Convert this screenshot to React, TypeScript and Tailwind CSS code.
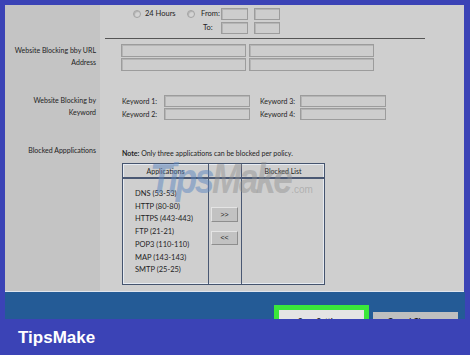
import React from "react";

const inp = "border border-[#9c9c9c] bg-[#cdcdcd] shadow-[inset_1px_1px_0_#b5b5b5]";

function Radio() {
  return <span className="block w-[8px] h-[8px] rounded-full border border-[#a3a3a3] bg-[#d4d4d4] shadow-[inset_1px_1px_1px_#b0b0b0]" />;
}

const apps = [
  "DNS (53-53)",
  "HTTP (80-80)",
  "HTTPS (443-443)",
  "FTP (21-21)",
  "POP3 (110-110)",
  "MAP (143-143)",
  "SMTP (25-25)",
];

export default function App() {
  return (
    <div className="w-[470px] h-[355px] bg-[#3b43b6] overflow-hidden flex flex-col font-[Lato,sans-serif] text-[7px] text-[#1e1e1e] leading-[12px]">
      {/* panel */}
      <div className="pt-[5px] pl-[5px] pr-[6px]">
        <div className="relative flex flex-col h-[287px] bg-[#cfcfcf] border-b border-[#dfe5ee]">
          {/* Row A: schedule */}
          <div className="flex h-[34px]">
            <div className="w-[95px] bg-[#c4c4c4]" />
            <div className="flex-1 flex flex-col">
              <div className="flex items-start pt-[3px] h-[33px]">
                <div className="ml-[33px] w-[54px] flex items-center h-[12px]">
                  <Radio />
                  <span className="ml-[4px] text-[7.5px]">24 Hours</span>
                </div>
                <div className="w-[14px] flex items-center h-[12px]">
                  <Radio />
                </div>
                <div className="w-[20px] flex flex-col gap-[2px] text-[7.5px]">
                  <span className="h-[12px]">From:</span>
                  <span className="h-[12px] pl-[2px]">To:</span>
                </div>
                <div className="w-[27px] flex flex-col gap-[2px]">
                  <div className={`h-[12px] ${inp}`} />
                  <div className={`h-[12px] ${inp}`} />
                </div>
                <div className="ml-[6px] w-[26px] flex flex-col gap-[2px]">
                  <div className={`h-[12px] ${inp}`} />
                  <div className={`h-[12px] ${inp}`} />
                </div>
              </div>
              <div className="ml-[5px] w-[320px] h-px bg-[#555]" />
            </div>
          </div>

          {/* Row B: URL */}
          <div className="flex h-[51px]">
            <div className="w-[95px] bg-[#c4c4c4] pt-[5px] pr-[4px] text-right">
              <div>Website Blocking bby URL</div>
              <div>Address</div>
            </div>
            <div className="flex-1 pt-[5px] pl-[21px]">
              <div className="grid grid-cols-[125px_125px] gap-x-[3px] gap-y-[1px]">
                <div className={`h-[13px] ${inp}`} />
                <div className={`h-[13px] ${inp}`} />
                <div className={`h-[13px] ${inp}`} />
                <div className={`h-[13px] ${inp}`} />
              </div>
            </div>
          </div>

          {/* Row C: Keywords */}
          <div className="flex h-[50px]">
            <div className="w-[95px] bg-[#c4c4c4] pt-[4px] pr-[4px] text-right">
              <div>Website Blocking by</div>
              <div>Keyword</div>
            </div>
            <div className="flex-1 pt-[5px] pl-[22px]">
              <div className="grid grid-cols-[42px_86px_10px_40px_86px] gap-y-[1px] items-center">
                <span>Keyword 1:</span>
                <div className={`h-[12px] ${inp}`} />
                <span />
                <span>Keyword 3:</span>
                <div className={`h-[12px] ${inp}`} />
                <span>Keyword 2:</span>
                <div className={`h-[12px] ${inp}`} />
                <span />
                <span>Keyword 4:</span>
                <div className={`h-[12px] ${inp}`} />
              </div>
            </div>
          </div>

          {/* Row D: blocked apps */}
          <div className="flex flex-1">
            <div className="w-[95px] bg-[#c4c4c4] pt-[4px] pr-[4px] text-right">
              <div>Blocked Appplications</div>
            </div>
            <div className="flex-1 pt-[7px] pl-[22px]">
              <div className="h-[16px]">
                <span className="font-bold">Note:</span> Only three applications can be blocked per policy.
              </div>
              <div className="w-[203px] h-[122px] border border-[#45546e] shadow-[inset_0_0_0_1px_#e6ebf2] grid grid-cols-[85px_33px_1fr] grid-rows-[15px_1fr]">
                <div className="border-b-2 border-[#4a5873] flex items-center justify-center">Applications</div>
                <div className="border-b-2 border-l border-[#4a5873]" />
                <div className="border-b-2 border-l border-[#4a5873] flex items-center justify-center">Blocked List</div>
                <div className="pl-[12px] pt-[9px] leading-[12.7px] text-[7.5px]">
                  {apps.map((a) => (
                    <div key={a}>{a}</div>
                  ))}
                </div>
                <div className="border-l border-[#4a5873] flex flex-col items-start pl-[2px] pt-[28px] gap-[9px]">
                  <div className="w-[27px] h-[15px] bg-[#c2c2c2] border border-t-[#e4e4e4] border-l-[#e4e4e4] border-r-[#8e8e8e] border-b-[#8e8e8e] flex items-center justify-center text-[7px] font-[Liberation_Sans,sans-serif]">&gt;&gt;</div>
                  <div className="w-[27px] h-[14px] bg-[#c2c2c2] border border-t-[#e4e4e4] border-l-[#e4e4e4] border-r-[#8e8e8e] border-b-[#8e8e8e] flex items-center justify-center text-[7px] font-[Liberation_Sans,sans-serif]">&lt;&lt;</div>
                </div>
                <div className="border-l border-[#4a5873]" />
              </div>
            </div>
          </div>

          {/* watermark */}
          <div className="absolute left-[145px] top-[148px] flex items-baseline pointer-events-none font-['Liberation_Sans',sans-serif] italic font-bold">
            <span className="text-[43px] leading-[50px] tracking-[-3px] origin-left scale-x-[0.82] inline-block whitespace-nowrap">
              <span className="text-[#5c86c0]/50">Tips</span>
              <span className="text-[#8d8d8d]/45">Make</span>
            </span>
            <span className="-ml-[30px] text-[10px] font-normal not-italic text-[#9a9a9a]/60">.com</span>
          </div>
        </div>
      </div>

      {/* dark band with buttons */}
      <div className="ml-[5px] mr-[5px] h-[27px] bg-[#245b96] overflow-hidden flex items-start">
        <div className="ml-[269px] mt-[13px] w-[95px] h-[30px] bg-[#3ae83a] p-[5px]">
          <div className="h-full bg-[#e4e4e4] flex justify-center pt-[5px] text-[8px] font-bold">Save Settings</div>
        </div>
        <div className="ml-[4px] mt-[20px] w-[85px] h-[30px] bg-[#bfbfbf] flex justify-center pt-[3px] text-[8px] font-bold">Cancel Changes</div>
      </div>

      {/* bottom brand bar */}
      <div className="flex-1 bg-[#3b43b6] flex items-center pl-[18px]">
        <span className="font-['Liberation_Sans',sans-serif] font-bold text-[17px] text-white leading-none">TipsMake</span>
      </div>
    </div>
  );
}
